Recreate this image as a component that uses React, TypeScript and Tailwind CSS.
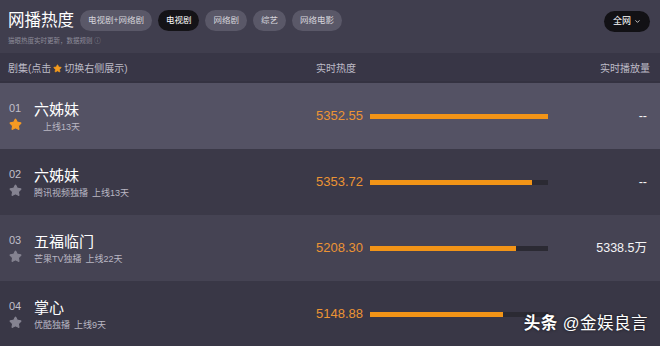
import { Star, ChevronDown } from 'lucide-react'

const font = { fontFamily: '"Liberation Sans", "Noto Sans CJK SC", sans-serif' }

const tabs = [
  { label: '电视剧+网络剧', active: false },
  { label: '电视剧', active: true },
  { label: '网络剧', active: false },
  { label: '综艺', active: false },
  { label: '网络电影', active: false },
]

const rows = [
  { rank: '01', name: '六姊妹', platform: '', days: '上线13天', score: '5352.55', pct: 100, play: '--', starred: true, bg: 'bg-[#545264]' },
  { rank: '02', name: '六姊妹', platform: '腾讯视频独播', days: '上线13天', score: '5353.72', pct: 91, play: '--', starred: false, bg: 'bg-[#3b3948]' },
  { rank: '03', name: '五福临门', platform: '芒果TV独播', days: '上线22天', score: '5208.30', pct: 82, play: '5338.5万', starred: false, bg: 'bg-[#454353]' },
  { rank: '04', name: '掌心', platform: '优酷独播', days: '上线9天', score: '5148.88', pct: 74.5, play: '', starred: false, bg: 'bg-[#393746]' },
]

export default function App() {
  return (
    <div className="relative w-[660px] h-[346px] overflow-hidden bg-[#3b3948]" style={font}>
      {/* header */}
      <div className="h-[53px] bg-[#403e4e] px-2 pt-[8px]">
        <div className="flex items-center">
          <h1 className="text-[16.5px] leading-[24px] text-white mr-[6px]">网播热度</h1>
          <div className="flex gap-[6px]">
            {tabs.map((t) => (
              <span key={t.label}
                className={`h-[21px] px-[8px] rounded-full text-[8.5px] leading-[21px] ${t.active ? 'bg-[#141317] text-white' : 'bg-[#5a5868] text-[#d6d5dc]'}`}>
                {t.label}
              </span>
            ))}
          </div>
          <span className="ml-auto mr-[2px] mt-[2px] h-[21px] px-[9px] rounded-full bg-[#121115] text-white text-[9px] leading-[21px] flex items-center gap-[3px]">
            全网 <ChevronDown size={7} strokeWidth={2.5} />
          </span>
        </div>
        <p className="mt-[5px] text-[6.5px] leading-[8px] text-[#8d8b99]">猫眼热度实时更新，数据规则 ⓘ</p>
      </div>

      {/* table header */}
      <div className="h-[30px] bg-[#383646] flex items-center pt-[3px] px-2 text-[10px] text-[#bdbbc7] border-b-2 border-[#343241]">
        <div className="w-[308px] flex items-center">
          剧集(点击<Star size={9} className="mx-[2px] fill-[#f39a1e] text-[#f39a1e]" />切换右侧展示)
        </div>
        <div>实时热度</div>
        <div className="ml-auto pr-[2px]">实时播放量</div>
      </div>

      {rows.map((r) => (
        <div key={r.rank} className={`h-[66px] flex items-center ${r.bg}`}>
          <div className="w-[316px] pl-[9px] pt-[3px] flex">
            <div className="w-[25px] flex flex-col items-start">
              <span className="text-[11px] leading-[14px] text-[#c0bfc9]">{r.rank}</span>
              <Star size={13} className={`mt-[3px] ml-[0px] ${r.starred ? 'fill-[#f59a23] text-[#f59a23]' : 'fill-[#858391] text-[#858391]'}`} />
            </div>
            <div className="flex flex-col">
              <span className="text-[15px] leading-[18px] text-white">{r.name}</span>
              <span className="text-[9px] leading-[14px] text-[#b9b7c3] mt-[1px]">
                {r.platform ? r.platform : <span className="inline-block w-[5px]" />}
                <span className="ml-[4px]">{r.days}</span>
              </span>
            </div>
          </div>
          <span className="w-[54px] text-[13px] text-[#ec9434]">{r.score}</span>
          <div className="w-[178px] h-[5px] bg-[#2b2a33]">
            <div className="h-full bg-[#f29417]" style={{ width: `${r.pct}%` }} />
          </div>
          <span className="ml-auto pr-[13px] text-[12.5px] text-[#f4f4f6]">{r.play}</span>
        </div>
      ))}

      <div className="absolute right-[12px] bottom-[10px] text-[16.5px] text-white tracking-[0.5px] [text-shadow:0_0_3px_rgba(0,0,0,0.7)]">
        <span className="font-bold">头条</span> @金娱良言
      </div>
    </div>
  )
}
